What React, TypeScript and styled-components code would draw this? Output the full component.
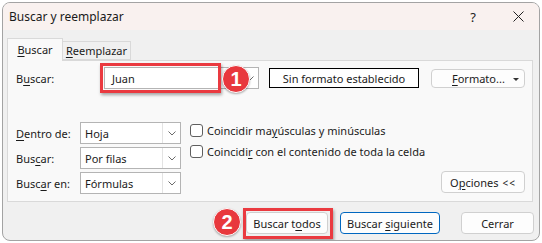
import React from "react";
import styled, { createGlobalStyle } from "styled-components";

const GlobalStyle = createGlobalStyle`
  html, body {
    margin: 0;
    padding: 0;
    background: #ffffff;
  }
  body {
    font-family: "Noto Sans", "Open Sans", sans-serif;
    font-size: 11px;
    color: #1b1b1b;
  }
`;

const Window = styled.div`
  margin: 2px 0 0 2px;
  width: 538px;
  height: 239px;
  box-sizing: border-box;
  border: 1px solid #a3a3a3;
  border-radius: 8px;
  overflow: hidden;
  background: #f0f0f0;
  display: flex;
  flex-direction: column;
`;

const TitleBar = styled.div`
  height: 27px;
  flex: none;
  background: #f9f1ef;
  display: flex;
  align-items: center;
  padding-left: 6px;
`;

const Title = styled.span`
  font-size: 12px;
  color: #1a1a1a;
`;

const TitleButtons = styled.div`
  margin-left: auto;
  display: flex;
  align-items: center;
  gap: 30px;
  padding-right: 15px;
`;

const HelpMark = styled.span`
  width: 20px;
  text-align: center;
  font-size: 13px;
  color: #222;
`;

const TabsRow = styled.div`
  height: 30px;
  flex: none;
  display: flex;
  align-items: flex-end;
  padding-left: 4px;
  position: relative;
  z-index: 1;
`;

const Tab = styled.div<{ $active?: boolean; $width: number }>`
  box-sizing: border-box;
  width: ${(p) => p.$width}px;
  height: ${(p) => (p.$active ? 23 : 19)}px;
  margin-bottom: ${(p) => (p.$active ? -1 : 0)}px;
  display: flex;
  align-items: center;
  justify-content: center;
  border: 1px solid #d9d9d9;
  border-bottom: ${(p) => (p.$active ? "none" : "1px solid #d9d9d9")};
  border-left: ${(p) => (p.$active ? "1px solid #d9d9d9" : "none")};
  background: ${(p) => (p.$active ? "#f9f9f9" : "#f0f0f0")};
  padding-bottom: ${(p) => (p.$active ? 1 : 0)}px;
`;

const Key = styled.u`
  text-decoration-thickness: 1px;
  text-underline-offset: 2px;
`;

const Panel = styled.div`
  box-sizing: border-box;
  margin-left: 4px;
  width: 526px;
  height: 142px;
  flex: none;
  border: 1px solid #d9d9d9;
  background: #f9f9f9;
  padding: 6px 7px 0 8px;
  display: flex;
  flex-direction: column;
`;

const SearchRow = styled.div`
  display: flex;
  align-items: center;
  height: 22px;
`;

const FieldLabel = styled.span<{ $width: number }>`
  width: ${(p) => p.$width}px;
  flex: none;
`;

const ComboWrap = styled.div`
  position: relative;
  width: 155px;
  height: 22px;
  flex: none;
`;

const Combo = styled.div`
  box-sizing: border-box;
  width: 100%;
  height: 100%;
  border: 1px solid #b4b4b4;
  background: #ffffff;
  display: flex;
  align-items: center;
`;

const ComboText = styled.span`
  flex: 1;
  padding-left: 7px;
`;

const DropPart = styled.span`
  width: 17px;
  height: 100%;
  display: flex;
  align-items: center;
  justify-content: center;
`;

const Highlight = styled.div<{ $l: number; $t: number; $w: number; $h: number }>`
  position: absolute;
  left: ${(p) => p.$l}px;
  top: ${(p) => p.$t}px;
  width: ${(p) => p.$w}px;
  height: ${(p) => p.$h}px;
  box-sizing: border-box;
  border: 3px solid #ea3a40;
  box-shadow: 1px 2px 3px rgba(0, 0, 0, 0.35);
  pointer-events: none;
`;

const Badge = styled.div<{ $l: number; $t: number }>`
  position: absolute;
  left: ${(p) => p.$l}px;
  top: ${(p) => p.$t}px;
  width: 28px;
  height: 28px;
  box-sizing: border-box;
  border-radius: 50%;
  background: #e8383d;
  border: 1px solid #ffffff;
  box-shadow: 0 1px 2px rgba(0, 0, 0, 0.3);
  color: #ffffff;
  font-family: "Liberation Sans", Arial, sans-serif;
  font-weight: bold;
  font-size: 20px;
  display: flex;
  align-items: center;
  justify-content: center;
  z-index: 2;
`;

const FormatBox = styled.div`
  box-sizing: border-box;
  margin-left: 10px;
  width: 152px;
  height: 20px;
  border: 1px solid #000000;
  background: #ffffff;
  display: flex;
  align-items: center;
  justify-content: center;
`;

const Button = styled.div<{ $width: number; $primary?: boolean; $height?: number }>`
  box-sizing: border-box;
  position: relative;
  width: ${(p) => p.$width}px;
  height: ${(p) => p.$height ?? 22}px;
  flex: none;
  border: 1px solid ${(p) => (p.$primary ? "#0067c0" : "#d0d0d0")};
  border-radius: 4px;
  background: #fdfdfd;
  display: flex;
  align-items: center;
  justify-content: center;
`;

const FormatButton = styled(Button)`
  margin-left: 12px;
  justify-content: flex-start;
  padding-left: 20px;
`;

const Caret = styled.span`
  position: absolute;
  right: 5px;
  top: 8px;
  width: 0;
  height: 0;
  border-left: 3px solid transparent;
  border-right: 3px solid transparent;
  border-top: 3px solid #333;
`;

const OptionsGrid = styled.div`
  margin-top: 33px;
  display: grid;
  grid-template-columns: 64px 101px 1fr;
  grid-template-rows: repeat(3, 22px);
  row-gap: 3px;
  align-items: center;
`;

const Select = styled.div`
  box-sizing: border-box;
  height: 22px;
  border: 1px solid #b4b4b4;
  background: #ffffff;
  display: flex;
  align-items: center;
`;

const SelectText = styled.span`
  flex: 1;
  padding-left: 4px;
`;

const SelectDrop = styled.span`
  width: 17px;
  height: 100%;
  border-left: 1px solid #e3e3e3;
  display: flex;
  align-items: center;
  justify-content: center;
`;

const CheckList = styled.div`
  grid-column: 3;
  grid-row: 1 / span 2;
  align-self: start;
  padding-left: 9px;
  display: flex;
  flex-direction: column;
  gap: 5px;
`;

const CheckItem = styled.label`
  display: flex;
  align-items: center;
  gap: 4px;
  height: 16px;
`;

const Box = styled.span`
  box-sizing: border-box;
  width: 13px;
  height: 13px;
  border: 1px solid #5f5f5f;
  border-radius: 3px;
  background: #ffffff;
`;

const OptionsButton = styled(Button)`
  grid-column: 3;
  grid-row: 3;
  justify-self: end;
  margin-top: -2px;
`;

const Arrows = styled.span`
  letter-spacing: 1px;
  margin-left: 4px;
  font-size: 10px;
`;

const BottomBar = styled.div`
  flex: 1;
  display: flex;
  justify-content: flex-end;
  align-items: flex-start;
  padding: 10px 5px 0 0;
  gap: 12px;
`;

const CloseButton = styled(Button)`
  margin-left: 9px;
`;

const Chevron = () => (
  <svg width="8" height="5" viewBox="0 0 8 5">
    <path d="M0.5 0.5 L4 4 L7.5 0.5" fill="none" stroke="#6b6b6b" strokeWidth="1" />
  </svg>
);

const CloseIcon = () => (
  <svg width="11" height="11" viewBox="0 0 11 11">
    <path d="M0.5 0.5 L10.5 10.5 M10.5 0.5 L0.5 10.5" stroke="#222" strokeWidth="1" />
  </svg>
);

const rows = [
  { label: <><Key>D</Key>entro de:</>, value: "Hoja" },
  { label: <>Bus<Key>c</Key>ar:</>, value: "Por filas" },
  { label: <>Busc<Key>a</Key>r en:</>, value: "Fórmulas" },
];

export default function App() {
  return (
    <>
      <GlobalStyle />
      <Window>
        <TitleBar>
          <Title>Buscar y reemplazar</Title>
          <TitleButtons>
            <HelpMark>?</HelpMark>
            <CloseIcon />
          </TitleButtons>
        </TitleBar>
        <TabsRow>
          <Tab $active $width={56}>
            <span><Key>B</Key>uscar</span>
          </Tab>
          <Tab $width={68}>
            <span><Key>R</Key>eemplazar</span>
          </Tab>
        </TabsRow>
        <Panel>
          <SearchRow>
            <FieldLabel $width={88}>B<Key>u</Key>scar:</FieldLabel>
            <ComboWrap>
              <Combo>
                <ComboText>Juan</ComboText>
                <DropPart>
                  <Chevron />
                </DropPart>
              </Combo>
              <Highlight $l={-4} $t={-4} $w={121} $h={30} />
              <Badge $l={118} $t={-2}>1</Badge>
            </ComboWrap>
            <FormatBox>Sin formato establecido</FormatBox>
            <FormatButton $width={94} $height={19}>
              <span><Key>F</Key>ormato...</span>
              <Caret />
            </FormatButton>
          </SearchRow>
          <OptionsGrid>
            {rows.map((r, i) => (
              <React.Fragment key={i}>
                <FieldLabel $width={64} style={{ gridRow: i + 1, gridColumn: 1 }}>
                  {r.label}
                </FieldLabel>
                <Select style={{ gridRow: i + 1, gridColumn: 2 }}>
                  <SelectText>{r.value}</SelectText>
                  <SelectDrop>
                    <Chevron />
                  </SelectDrop>
                </Select>
              </React.Fragment>
            ))}
            <CheckList>
              <CheckItem>
                <Box />
                <span>Coincidir ma<Key>y</Key>úsculas y minúsculas</span>
              </CheckItem>
              <CheckItem>
                <Box />
                <span>Coincidi<Key>r</Key> con el contenido de toda la celda</span>
              </CheckItem>
            </CheckList>
            <OptionsButton $width={84}>
              <span>O<Key>p</Key>ciones<Arrows>&lt;&lt;</Arrows></span>
            </OptionsButton>
          </OptionsGrid>
        </Panel>
        <BottomBar>
          <Button $width={82}>
            <span>Buscar t<Key>o</Key>dos</span>
            <Highlight $l={-4} $t={-5} $w={90} $h={31} />
            <Badge $l={-34} $t={-5}>2</Badge>
          </Button>
          <Button $width={100} $primary>
            <span>Buscar <Key>s</Key>iguiente</span>
          </Button>
          <CloseButton $width={73}>Cerrar</CloseButton>
        </BottomBar>
      </Window>
    </>
  );
}
